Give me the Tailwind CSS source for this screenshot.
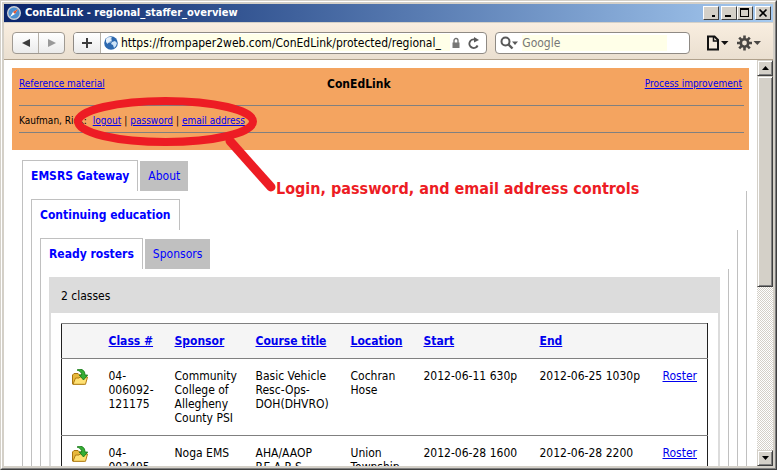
<!DOCTYPE html>
<html lang="en">
<head>
<meta charset="utf-8">
<title>ConEdLink - regional_staffer_overview</title>
<script src="https://cdn.jsdelivr.net/npm/@tailwindcss/browser@4"></script>
</head>
<body class="font-['DejaVu_Sans_Condensed','DejaVu_Sans',sans-serif] text-xs text-black">
<div class="h-screen border border-t-[#d4d0c8] border-l-[#d4d0c8] border-r-[#404040] border-b-[#404040]">
<div class="flex h-full flex-col border border-t-white border-l-white border-r-[#808080] border-b-[#808080] bg-[#d4d0c8] p-[2px]">

  <!-- Title bar -->
  <header class="flex h-[18px] shrink-0 items-center bg-linear-to-r from-[#0a246a] to-[#a6caf0] pr-[2px] pl-[3px]">
    <svg class="size-[14px]" viewBox="0 0 14 14" aria-hidden="true"><circle cx="7" cy="7" r="6.3" fill="#4c8fd0" stroke="#c9ced6" stroke-width="1.4"/><path d="M11 3 8 8 3 11 6 6z" fill="#fff"/><path d="M11 3 8 8 6 6z" fill="#e0522d"/></svg>
    <h1 class="ml-1 flex-1 text-[11px] font-bold text-white">ConEdLink - regional_staffer_overview</h1>
    <div class="flex">
      <button aria-label="Options" class="mr-[2px] h-[14px] w-4 border border-t-white border-l-white border-r-[#404040] border-b-[#404040] bg-[#d4d0c8]"><svg viewBox="0 0 14 12" class="block"><path d="M8 8h3v2H8z"/></svg></button>
      <button aria-label="Minimize" class="h-[14px] w-4 border border-t-white border-l-white border-r-[#404040] border-b-[#404040] bg-[#d4d0c8]"><svg viewBox="0 0 14 12" class="block"><path d="M3 8h6v2H3z"/></svg></button>
      <button aria-label="Maximize" class="mr-[2px] h-[14px] w-4 border border-t-white border-l-white border-r-[#404040] border-b-[#404040] bg-[#d4d0c8]"><svg viewBox="0 0 14 12" class="block"><path fill-rule="evenodd" d="M2 1h9v9H2zM3 3v6h7V3z"/></svg></button>
      <button aria-label="Close" class="h-[14px] w-4 border border-t-white border-l-white border-r-[#404040] border-b-[#404040] bg-[#d4d0c8]"><svg viewBox="0 0 14 12" class="block"><path d="m3.500 2.500 7 7m0-7-7 7" stroke="#000" stroke-width="1.700"/></svg></button>
    </div>
  </header>

  <!-- Toolbar -->
  <nav class="mt-px flex h-[37px] shrink-0 items-center border-b border-[#b0a18c] bg-linear-to-b from-[#f9eee0] to-[#eadfd0] pt-[3px] pr-3 pl-2">
    <div class="flex h-[22px] w-[53px] overflow-hidden rounded-[4px] border border-[#a09a92] bg-linear-to-b from-white to-[#ebebeb]">
      <button aria-label="Back" class="flex flex-1 items-center justify-center border-r border-[#b5b0a8]"><svg class="size-[10px]" viewBox="0 0 10 10"><path d="M1 5 9 1v8z" fill="#3c3c3c"/></svg></button>
      <button aria-label="Forward" class="flex flex-1 items-center justify-center"><svg class="size-[10px]" viewBox="0 0 10 10"><path d="M9 5 1 1v8z" fill="#999"/></svg></button>
    </div>
    <form class="ml-2 flex h-[22px] min-w-0 flex-1 items-center overflow-hidden rounded-[4px] border border-[#8f8a84] bg-white">
      <button type="button" aria-label="Add bookmark" class="flex h-full w-[27px] shrink-0 items-center justify-center border-r border-[#b5b0a8] bg-linear-to-b from-white to-[#ebebeb]"><svg class="size-3" viewBox="0 0 12 12"><path d="M6 1v10M1 6h10" stroke="#3c3c3c" stroke-width="2"/></svg></button>
      <svg class="ml-[3px] size-[14px] shrink-0" viewBox="0 0 14 14" aria-hidden="true"><circle cx="7" cy="7" r="6.800" fill="#2d69b0"/><path d="M2 3c2-2 4-2 6-2L6.500 3l1 1.500L5 6 3.500 8 2 6zM8 6l3-1 2 2-1 3-2 2-1-3-2-1z" fill="#cfe4f8"/><circle cx="5" cy="4" r="3" fill="#fff" opacity=".45"/></svg>
      <input aria-label="Address" value="https://frompaper2web.com/ConEdLink/protected/regional_" class="ml-[2px] h-[17px] min-w-0 flex-1 bg-[#ffffe8] pl-px outline-none">
      <svg class="ml-[2px] h-3 w-2 shrink-0" viewBox="0 0 8 12" aria-hidden="true"><path d="M2 6V3.500a2 2 0 0 1 4 0V6" fill="none" stroke="#6e6e6e" stroke-width="1.300"/><path d="M.5 5.500h7V11h-7z" fill="#777"/></svg>
      <button type="button" aria-label="Reload" class="mr-[6px] ml-2 shrink-0"><svg class="block size-3" viewBox="0 0 12 12"><path d="M9.600 8.500A4.300 4.300 0 1 1 7 2.600" fill="none" stroke="#595959" stroke-width="1.900"/><path d="M6 0v5.500L11 3z" fill="#595959"/></svg></button>
    </form>
    <form class="ml-2 flex h-[22px] w-[26%] items-center rounded-[4px] border border-[#8f8a84] bg-white pr-[22px]">
      <svg class="ml-1 h-[14px] w-[18px] shrink-0" viewBox="0 0 18 14" aria-hidden="true"><circle cx="5.500" cy="5.500" r="4" fill="none" stroke="#595959" stroke-width="2"/><path d="m8.500 8.500 4 4" stroke="#595959" stroke-width="2.400"/><path d="M12 5.500h6L15 9z" fill="#595959"/></svg>
      <input aria-label="Search" placeholder="Google" class="ml-1 h-4 min-w-0 flex-1 bg-[#ffffe8] outline-none placeholder:text-[#777]">
    </form>
    <button aria-label="Page menu" class="ml-[17px]"><svg class="block h-4 w-[22px]" viewBox="0 0 22 16"><path d="M1 1.500h6.500L11 5v9.500H1z" fill="#f4eadc" stroke="#111" stroke-width="2"/><path d="M6.500 1v5H11" fill="none" stroke="#111" stroke-width="1.500"/><path d="M14 6h7.500L17.700 10z" fill="#111"/></svg></button>
    <button aria-label="Settings menu" class="ml-2"><svg class="block h-4 w-6" viewBox="0 0 24 16"><g stroke="#4a4744"><circle cx="7.500" cy="8" r="3.700" fill="none" stroke-width="2.600"/><path d="M7.500 .5V4M7.500 12v3.500M0 8h3.500M11.500 8H15M2.200 2.700l2.500 2.500M10.300 10.800l2.500 2.500M12.800 2.700l-2.500 2.500M4.700 10.800l-2.500 2.500" stroke-width="2.600"/></g><path d="M16.500 6H24l-3.700 4z" fill="#4a4744"/></svg></button>
  </nav>

  <div class="flex min-h-0 flex-1">
    <!-- Page -->
    <main class="relative min-w-0 flex-1 overflow-hidden bg-white px-2 pt-2">
      <section class="bg-[#f4a460] pr-[5px] pb-[17px] pl-[7px] text-[10px] leading-4">
        <div class="grid grid-cols-[36fr_22fr_42fr] border-b border-[#808080] pt-2 pr-[2px] pb-[13px]">
          <a href="#" class="text-[#0000ee] underline">Reference material</a>
          <h2 class="text-center text-xs font-bold">ConEdLink</h2>
          <a href="#" class="text-right text-[#0000ee] underline">Process improvement</a>
        </div>
        <div class="flex border-b border-[#808080] pt-[7px] pb-[3px]">
          <span class="mr-[6px]">Kaufman, Rick:</span>
          <a href="#" class="text-[#0000ee] underline">logout</a><span class="mx-[3px]">|</span>
          <a href="#" class="text-[#0000ee] underline">password</a><span class="mx-[3px]">|</span>
          <a href="#" class="text-[#0000ee] underline">email address</a>
        </div>
      </section>

      <section class="mt-[10px] mr-[2px] ml-[10px]">
        <div class="flex items-end gap-[2px] pt-px leading-[29px] text-[#0000ff]">
          <a href="#" class="-mt-px border border-b-0 border-[#c0c0c0] px-2 pt-px font-bold">EMSRS Gateway</a>
          <a href="#" class="bg-[#c0c0c0] px-2 pt-px">About</a>
        </div>
        <div class="border-x border-[#c0c0c0] px-2 pt-2">
          <div class="flex items-end gap-[2px] pt-px leading-[29px] text-[#0000ff]">
            <a href="#" class="-mt-px border border-b-0 border-[#c0c0c0] px-2 pt-px font-bold">Continuing education</a>
          </div>
          <div class="border-x border-[#c0c0c0] px-2 pt-2">
            <div class="flex items-end gap-[2px] pt-px leading-[29px] text-[#0000ff]">
              <a href="#" class="-mt-px border border-b-0 border-[#c0c0c0] px-2 pt-px font-bold">Ready rosters</a>
              <a href="#" class="bg-[#c0c0c0] px-2 pt-px">Sponsors</a>
            </div>
            <div class="border-x border-[#c0c0c0] px-2 pt-2">
              <div class="border-x-2 border-[#dcdcdc]">
                <h3 class="bg-[#dcdcdc] px-[10px] pt-[2px] leading-[34px]">2 classes</h3>
                <div class="p-[10px]">
                  <table class="w-full table-fixed border-collapse border border-x-[#202020] border-y-[#808080] text-left leading-[14px]">
                    <colgroup><col class="w-[37px]"><col class="w-[66px]"><col class="w-[81px]"><col class="w-[95px]"><col class="w-[73px]"><col class="w-[116px]"><col class="w-[123px]"><col></colgroup>
                    <thead>
                      <tr class="border-b border-[#808080] bg-[#f5f5f5] text-[#0000ee] underline">
                        <th aria-label="Open"></th>
                        <th class="py-[10px] pl-[10px] whitespace-nowrap"><a href="#">Class #</a></th>
                        <th class="pl-[10px]"><a href="#">Sponsor</a></th>
                        <th class="pl-[10px] whitespace-nowrap"><a href="#">Course title</a></th>
                        <th class="pl-[10px]"><a href="#">Location</a></th>
                        <th class="pl-[10px]"><a href="#">Start</a></th>
                        <th class="pl-[10px]"><a href="#">End</a></th>
                        <th aria-label="Roster"></th>
                      </tr>
                    </thead>
                    <tbody>
                      <tr class="border-b border-[#808080] align-top">
                        <td class="py-[10px] pl-[10px]"><svg class="block size-4" viewBox="0 0 16 16" role="img" aria-label="Open class"><path d="M.500 15V6L2 4.500h4L7.500 6H12v9z" fill="#e8b93c" stroke="#a87410"/><path d="M1 15.300 3.500 9H7l1-1h7.500L13.500 15.300z" fill="#ffe173" stroke="#b07c14"/><path d="M5 1C8-.5 13 0 13 6h2.700L11.500 11 7.300 6h2.400C9.700 3.500 8 2 5 1z" fill="#35ae35" stroke="#137513" stroke-width=".8"/></svg></td>
                        <td class="py-[10px] pl-[10px]">04-<br>006092-<br>121175</td>
                        <td class="py-[10px] pl-[10px]">Community<br>College of<br>Allegheny<br>County PSI</td>
                        <td class="py-[10px] pl-[10px]">Basic Vehicle<br>Resc-Ops-<br>DOH(DHVRO)</td>
                        <td class="py-[10px] pl-[10px]">Cochran<br>Hose</td>
                        <td class="py-[10px] pl-[10px] whitespace-nowrap">2012-06-11 630p</td>
                        <td class="py-[10px] pl-[10px] whitespace-nowrap">2012-06-25 1030p</td>
                        <td class="py-[10px] pl-[10px]"><a href="#" class="text-[#0000ee] underline">Roster</a></td>
                      </tr>
                      <tr class="border-b border-[#808080] align-top">
                        <td class="py-[10px] pl-[10px]"><svg class="block size-4" viewBox="0 0 16 16" role="img" aria-label="Open class"><path d="M.500 15V6L2 4.500h4L7.500 6H12v9z" fill="#e8b93c" stroke="#a87410"/><path d="M1 15.300 3.500 9H7l1-1h7.500L13.500 15.300z" fill="#ffe173" stroke="#b07c14"/><path d="M5 1C8-.5 13 0 13 6h2.700L11.500 11 7.300 6h2.400C9.700 3.500 8 2 5 1z" fill="#35ae35" stroke="#137513" stroke-width=".8"/></svg></td>
                        <td class="py-[10px] pl-[10px]">04-<br>002495-</td>
                        <td class="py-[10px] pl-[10px]">Noga EMS</td>
                        <td class="py-[10px] pl-[10px]">AHA/AAOP<br>P.E.A.R.S.</td>
                        <td class="py-[10px] pl-[10px]">Union<br>Township</td>
                        <td class="py-[10px] pl-[10px] whitespace-nowrap">2012-06-28 1600</td>
                        <td class="py-[10px] pl-[10px] whitespace-nowrap">2012-06-28 2200</td>
                        <td class="py-[10px] pl-[10px]"><a href="#" class="text-[#0000ee] underline">Roster</a></td>
                      </tr>
                    </tbody>
                  </table>
                </div>
              </div>
            </div>
          </div>
        </div>
      </section>

      <!-- Callout over the account links -->
      <svg class="pointer-events-none absolute top-[30px] left-[65px] h-[105px] w-[210px]" viewBox="0 0 210 105" fill="none" stroke="#ed1c24" aria-hidden="true"><ellipse cx="96.500" cy="31.500" rx="87.500" ry="20.500" stroke-width="8"/><path d="m161 51 41 46" stroke-width="9" stroke-linecap="round"/></svg>
      <p class="absolute top-[119px] left-[272px] text-base leading-5 font-bold whitespace-nowrap text-[#ed1c24]">Login, password, and email address controls</p>
    </main>

    <!-- Scrollbar -->
    <aside class="flex w-4 shrink-0 flex-col bg-[repeating-conic-gradient(#d4d0c8_0_25%,#fff_0_50%)] bg-[length:2px_2px]">
      <button aria-label="Scroll up" class="flex h-4 items-center justify-center border border-t-[#d4d0c8] border-l-[#d4d0c8] border-r-[#404040] border-b-[#404040] bg-[#d4d0c8] shadow-[inset_1px_1px_#fff,inset_-1px_-1px_#808080]"><svg class="h-1 w-[7px]" viewBox="0 0 7 4"><path d="M3.500 0 7 4H0z"/></svg></button>
      <div class="h-[52%] border border-t-[#d4d0c8] border-l-[#d4d0c8] border-r-[#404040] border-b-[#404040] bg-[#d4d0c8] shadow-[inset_1px_1px_#fff,inset_-1px_-1px_#808080]"></div>
      <button aria-label="Scroll down" class="mt-auto flex h-4 items-center justify-center border border-t-[#d4d0c8] border-l-[#d4d0c8] border-r-[#404040] border-b-[#404040] bg-[#d4d0c8] shadow-[inset_1px_1px_#fff,inset_-1px_-1px_#808080]"><svg class="h-1 w-[7px]" viewBox="0 0 7 4"><path d="M3.500 4 7 0H0z"/></svg></button>
    </aside>
  </div>
</div>
</div>
</body>
</html>
